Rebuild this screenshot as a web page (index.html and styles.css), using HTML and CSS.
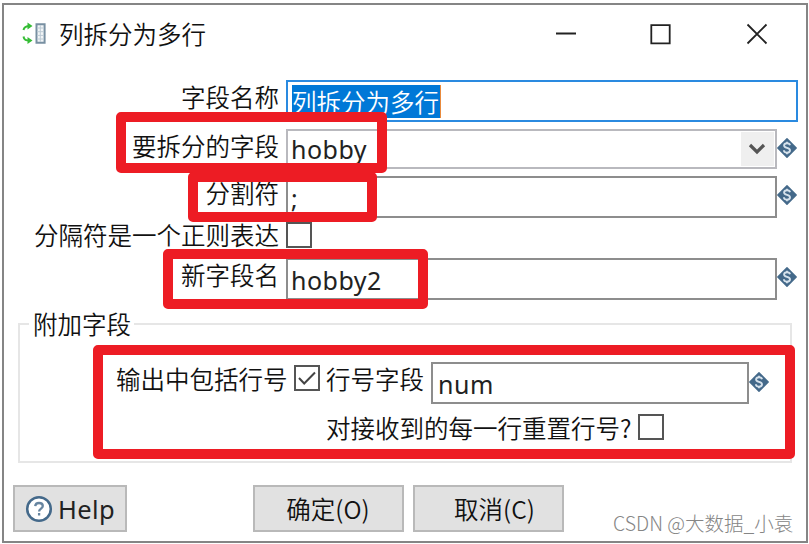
FILE: index.html
```html
<!DOCTYPE html>
<html lang="zh-CN">
<head>
<meta charset="utf-8">
<title>列拆分为多行</title>
<link rel="stylesheet" href="styles.css">
</head>
<body>
<svg class="defs" width="0" height="0">
  <symbol id="variable" viewBox="0 0 20 20">
    <path d="M10 .8 19.2 10 10 19.2 .8 10Z" fill="#44698a" stroke="#44698a" stroke-width="1.4" stroke-linejoin="round"/>
    <path d="M13 7.3C12.7 5.8 11.6 5.3 10 5.3 8.2 5.3 7.1 6.1 7.1 7.5 7.1 10.6 13 9 13 12.3 13 13.8 11.8 14.7 10 14.7 8.1 14.7 7 13.9 6.9 12.3M10 3.8V5.3M10 14.7V16.2" fill="none" stroke="#d6e2ec" stroke-width="1.9"/>
  </symbol>
</svg>
<div class="window">
  <header class="titlebar">
    <svg class="app-icon" width="24" height="24" viewBox="0 0 24 24" fill="none">
      <path d="M1.5 8C2 5 4 4 8 4M1.5 14.5C2 18 4 18.5 8 18.5" stroke="#35bd35" stroke-width="2"/>
      <path d="M5.5 .5 10.5 4 5.5 7.5ZM5.5 15 10.5 18.5 5.5 22Z" fill="#35bd35"/>
      <path d="M14.5 2.2H22.6V20.8H14.5Z" fill="#f2f5f7" stroke="#7890a2" stroke-width="2"/>
      <path d="M15 6H22M15 9.7H22M15 13.4H22M15 17H22M18.3 3V20" stroke="#bccad4" stroke-width="1"/>
    </svg>
    <span class="title">列拆分为多行</span>
    <svg class="controls" width="214" height="22" viewBox="0 0 214 22" fill="none" stroke="#222" stroke-width="1.8">
      <path d="M1 10.5H21M96.3 2.1H114.7V20.3H96.3ZM192.5 1.5 211.5 20.5M211.5 1.5 192.5 20.5"/>
    </svg>
  </header>
  <main class="form">
    <div class="row name">
      <label>字段名称</label>
      <div class="field focused"><span class="selected">列拆分为多行</span></div>
    </div>
    <div class="row split">
      <label>要拆分的字段</label>
      <div class="field combo"><span>hobby</span>
        <span class="drop"><svg width="18" height="12" viewBox="0 0 18 12"><path d="M2 2 9 9 16 2" fill="none" stroke="#555" stroke-width="3.2"/></svg></span>
      </div>
      <svg class="var"><use href="#variable"/></svg>
      <i class="mark mark-split"></i>
    </div>
    <div class="row delimiter">
      <label>分割符</label>
      <div class="field"><span>;</span></div>
      <svg class="var"><use href="#variable"/></svg>
      <i class="mark mark-delimiter"></i>
    </div>
    <div class="row regex">
      <label>分隔符是一个正则表达</label>
      <span class="check"></span>
    </div>
    <div class="row newname">
      <label>新字段名</label>
      <div class="field"><span>hobby2</span></div>
      <svg class="var"><use href="#variable"/></svg>
      <i class="mark mark-newname"></i>
    </div>
  </main>
  <section class="group">
    <h2>附加字段</h2>
    <div class="line number">
      <label>输出中包括行号</label>
      <span class="check"><svg width="22" height="22" viewBox="0 0 22 22"><path d="M3 11 8.2 16.5 19 5.5" fill="none" stroke="#444" stroke-width="2"/></svg></span>
      <label class="second">行号字段</label>
      <div class="field"><span>num</span></div>
      <svg class="var"><use href="#variable"/></svg>
    </div>
    <div class="line reset">
      <label>对接收到的每一行重置行号?</label>
      <span class="check"></span>
    </div>
    <i class="mark mark-group"></i>
  </section>
  <footer class="actions">
    <div class="button help">
      <svg width="28" height="28" viewBox="0 0 28 28" fill="none" stroke="#44698a">
        <circle cx="14" cy="14" r="11.8" fill="#fff" stroke-width="2.5"/>
        <path d="M10.2 11.2C10.4 9 11.8 8 14 8 16.3 8 17.8 9.1 17.8 11 17.8 13.6 14.1 13.6 14.1 16.5M14.1 18V20.5" stroke="#6785a0" stroke-width="2.3"/>
      </svg>
      <span>Help</span>
    </div>
    <div class="button ok">确定(O)</div>
    <div class="button cancel">取消(C)</div>
    <span class="watermark">CSDN @大数据_小袁</span>
  </footer>
</div>
</body>
</html>
```

FILE: styles.css
```css
* { box-sizing: border-box; }

body {
  margin: 0;
  width: 809px;
  height: 544px;
  overflow: hidden;
  background: #fff;
  color: #111;
  font: 350 24.5px/34px "Noto Sans CJK SC", sans-serif;
  white-space: nowrap;
}

.defs { display: block; }

.window {
  width: 806px;
  height: 540px;
  margin: 3px 0 0 2px;
  border: 2px solid #858585;
}

.titlebar {
  display: flex;
  align-items: center;
  height: 58px;
  padding-left: 18px;
}

.app-icon { margin: 0 13px 0 0; }
.title { width: 495px; }
.controls { margin-left: 1px; }

.form { padding: 17px 0 0 14px; }

.row, .line { display: flex; position: relative; }
.row > label { width: 261px; height: 34px; line-height: 33px; text-align: right; margin-right: 7px; }

.field {
  width: 491px;
  border: 2px solid #8d8d8d;
  padding-left: 3px;
  font: 400 25px/41px "Noto Sans", "Noto Sans CJK SC", sans-serif;
  letter-spacing: .5px;
  color: #222;
}

.name { height: 42px; }
.name .field {
  width: 512px;
  padding-left: 4px;
  font: 350 24.5px/33px "Noto Sans CJK SC", sans-serif;
  letter-spacing: 0;
}
.name .focused { border-color: #2a8ae0; padding-top: 3px; }
.selected {
  display: block;
  width: 149px;
  height: 33px;
  line-height: 33px;
  border-right: 1px solid #e98a3c;
  background: #0078d7;
  color: #fff;
}

.split { height: 40px; margin-top: 7px; }
.combo {
  display: flex;
  justify-content: space-between;
  border-color: #b9b9be;
  line-height: 37px;
}
.drop {
  display: flex;
  align-items: center;
  justify-content: center;
  width: 33px;
  margin: 1px;
  padding-right: 2px;
  background: #efefef;
}

.delimiter { height: 42px; margin-top: 7px; }
.regex { height: 26px; margin-top: 4px; }
.regex > label { line-height: 26px; }
.newname { height: 42px; margin-top: 10px; }

.var { width: 20px; height: 20px; margin-top: 9px; }

.check {
  width: 26px;
  height: 26px;
  border: 2px solid #555;
}
.check svg { display: block; }

.mark {
  position: absolute;
  z-index: 1;
  border: 10px solid #ed1c24;
  border-radius: 5px;
}
.mark-split { left: 98px; top: -17px; width: 271px; height: 61px; }
.mark-delimiter { left: 170px; top: -4px; width: 189px; height: 50px; }
.mark-newname { left: 145px; top: -9px; width: 265px; height: 60px; }
.mark-group { left: 73px; top: 20px; width: 702px; height: 114px; }

.group {
  position: relative;
  width: 774px;
  height: 140px;
  margin: 23px 0 0 14px;
  border: 2px solid #e6e6e6;
}
.group h2 {
  width: 105px;
  height: 34px;
  margin: -18px 0 0 9px;
  padding-left: 4px;
  background: #fff;
  font: inherit;
  line-height: 33px;
}
.number { height: 42px; margin: 21px 0 0 96px; }
.number .check { margin: 3px 6px 0 6px; }
.number .second { width: 105px; }
.number .field { width: 318px; padding-left: 5px; }
.number .var { margin-top: 10px; }
.line label { line-height: 34px; }
.number > label:first-child { width: 172px; }
.reset { height: 34px; margin: 7px 0 0 306px; }
.reset label { width: 312px; }
.reset .check { margin-top: 3px; }

.actions {
  display: flex;
  height: 47px;
  margin: 22px 0 0 9px;
}
.button {
  display: flex;
  align-items: center;
  justify-content: center;
  height: 47px;
  border: 2px solid #b9b9b9;
  background: #e1e1e1;
}
.help { width: 114px; gap: 5px; font-family: "Noto Sans", sans-serif; font-weight: 400; font-size: 25.5px; letter-spacing: .4px; color: #222; }
.ok { width: 151px; margin-left: 126px; padding-right: 1px; }
.cancel { width: 151px; margin-left: 9px; padding-left: 12px; }
.watermark {
  margin: 21px 0 0 49px;
  color: #858585;
  font-size: 19.5px;
  font-weight: 300;
}
```
